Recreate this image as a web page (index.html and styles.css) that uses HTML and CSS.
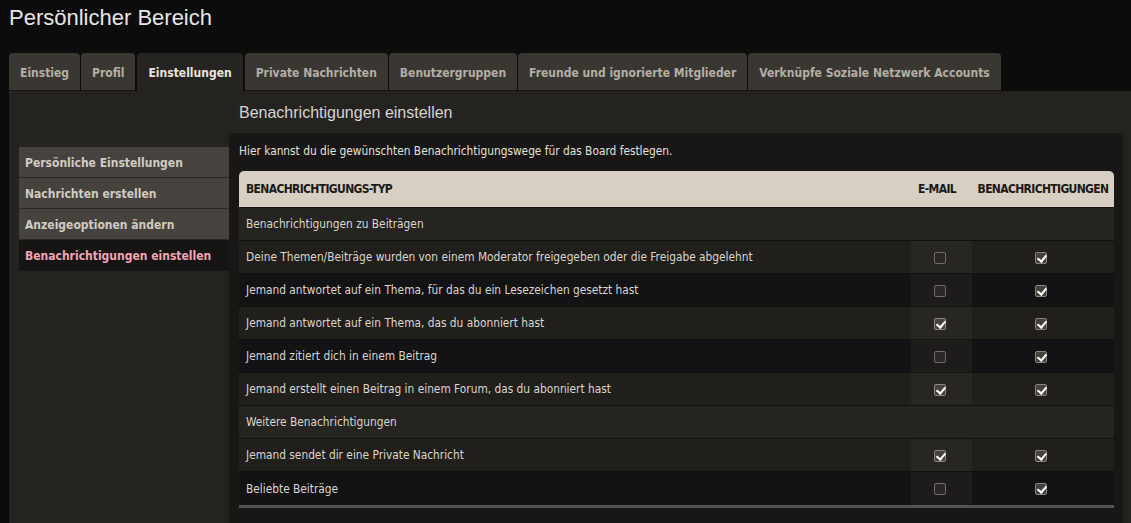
FILE: index.html
```html
<!DOCTYPE html>
<html>
<head>
  <meta charset="UTF-8">
  <title>Persönlicher Bereich</title>
  <meta name="viewport" content="width=device-width, initial-scale=1.0">
  <link rel="stylesheet" href="styles.css">
</head>
<body>
  <h1 class="page-title">Persönlicher Bereich</h1>

  <ul class="tabs">
    <li class="tab">Einstieg</li>
    <li class="tab">Profil</li>
    <li class="tab active">Einstellungen</li>
    <li class="tab">Private Nachrichten</li>
    <li class="tab">Benutzergruppen</li>
    <li class="tab">Freunde und ignorierte Mitglieder</li>
    <li class="tab">Verknüpfe Soziale Netzwerk Accounts</li>
  </ul>

  <div class="panel">
    <ul class="side-menu">
      <li>Persönliche Einstellungen</li>
      <li>Nachrichten erstellen</li>
      <li>Anzeigeoptionen ändern</li>
      <li class="current">Benachrichtigungen einstellen</li>
    </ul>

    <div class="main">
      <h2 class="main-title">Benachrichtigungen einstellen</h2>
      <div class="content">
        <p class="intro">Hier kannst du die gewünschten Benachrichtigungswege für das Board festlegen.</p>

        <table class="notify">
          <thead>
            <tr>
              <th class="col-type">Benachrichtigungs-Typ</th>
              <th class="col-mail">E-Mail</th>
              <th class="col-notify">Benachrichtigungen</th>
            </tr>
          </thead>
          <tbody>
            <tr class="section"><td colspan="3">Benachrichtigungen zu Beiträgen</td></tr>
            <tr class="bg1">
              <td>Deine Themen/Beiträge wurden von einem Moderator freigegeben oder die Freigabe abgelehnt</td>
              <td class="mail"><span class="box"></span></td>
              <td class="note"><span class="box on"></span></td>
            </tr>
            <tr class="bg2">
              <td>Jemand antwortet auf ein Thema, für das du ein Lesezeichen gesetzt hast</td>
              <td class="mail"><span class="box"></span></td>
              <td class="note"><span class="box on"></span></td>
            </tr>
            <tr class="bg1">
              <td>Jemand antwortet auf ein Thema, das du abonniert hast</td>
              <td class="mail"><span class="box on"></span></td>
              <td class="note"><span class="box on"></span></td>
            </tr>
            <tr class="bg2">
              <td>Jemand zitiert dich in einem Beitrag</td>
              <td class="mail"><span class="box"></span></td>
              <td class="note"><span class="box on"></span></td>
            </tr>
            <tr class="bg1">
              <td>Jemand erstellt einen Beitrag in einem Forum, das du abonniert hast</td>
              <td class="mail"><span class="box on"></span></td>
              <td class="note"><span class="box on"></span></td>
            </tr>
            <tr class="section"><td colspan="3">Weitere Benachrichtigungen</td></tr>
            <tr class="bg1">
              <td>Jemand sendet dir eine Private Nachricht</td>
              <td class="mail"><span class="box on"></span></td>
              <td class="note"><span class="box on"></span></td>
            </tr>
            <tr class="bg2">
              <td>Beliebte Beiträge</td>
              <td class="mail"><span class="box"></span></td>
              <td class="note"><span class="box on"></span></td>
            </tr>
          </tbody>
        </table>
      </div>
    </div>
  </div>
</body>
</html>
```

FILE: styles.css
```css
* {
  box-sizing: border-box;
}

body {
  margin: 0;
  background: #0d0c0c;
  font-family: "DejaVu Sans Condensed", "DejaVu Sans", sans-serif;
  font-stretch: condensed;
  font-size: 11.8px;
  color: #dad6ce;
  overflow: hidden;
}

.page-title {
  margin: 0;
  padding: 5px 0 0 9px;
  height: 53px;
  font-family: "Liberation Sans", Arial, sans-serif;
  font-stretch: normal;
  font-weight: normal;
  font-size: 22px;
  line-height: 26px;
  color: #e6e6e6;
}

/* tab bar */
.tabs {
  list-style: none;
  margin: 0 0 0 9px;
  padding: 0;
  display: flex;
  gap: 1px;
}

.tab {
  height: 38px;
  padding: 0 11px;
  line-height: 40px;
  font-weight: bold;
  font-size: 12px;
  color: #b4aea4;
  background: #3a3733;
  border-radius: 4px 4px 0 0;
  border-bottom: 1px solid #141312;
}

.tab.active {
  background: #262420;
  color: #e8e4dc;
  border-bottom-color: #262420;
  margin: 0 1px;
}

/* panel under the tabs */
.panel {
  margin-left: 9px;
  background: #252320;
  display: flex;
  min-height: 440px;
}

.side-menu {
  list-style: none;
  margin: 56px 0 0 10px;
  padding: 0;
  width: 210px;
  flex-shrink: 0;
}

.side-menu li {
  height: 31px;
  padding: 2px 0 0 6px;
  line-height: 28px;
  font-weight: bold;
  font-size: 12px;
  color: #d2cbc2;
  background: #46433e;
  border-bottom: 1px solid #2a2826;
}

.side-menu li.current {
  background: #171514;
  color: #f2a5b5;
  border-bottom: none;
}

.main {
  flex: 1;
  padding-right: 8px;
}

.main-title {
  margin: 0;
  padding: 12px 0 0 10px;
  height: 42px;
  font-family: "Liberation Sans", Arial, sans-serif;
  font-stretch: normal;
  font-weight: normal;
  font-size: 16px;
  line-height: 20px;
  color: #d4d4d4;
}

.content {
  background: #191716;
  border-radius: 0 5px 0 0;
  padding: 10px 9px 20px 10px;
}

.intro {
  margin: 0 0 12px;
  line-height: 16px;
  color: #e4e1dc;
}

/* notification table */
.notify {
  width: 100%;
  border-collapse: separate;
  border-spacing: 0;
  border-bottom: 3px solid #555350;
}

.notify th {
  height: 37px;
  background: #d6cfc2;
  color: #1c1a18;
  font-weight: bold;
  font-size: 12px;
  letter-spacing: -0.65px;
  text-transform: uppercase;
  border-bottom: 1px solid #141312;
}

.notify .col-type {
  text-align: left;
  padding-left: 7px;
  border-radius: 5px 0 0 0;
}

.notify .col-mail {
  width: 61px;
  text-align: center;
  padding-right: 10px;
}

.notify .col-notify {
  width: 142px;
  text-align: center;
  border-radius: 0 5px 0 0;
}

.notify td {
  height: 33px;
  padding: 0 0 0 7px;
  border-bottom: 1px solid #121110;
}

.notify tr:last-child td {
  border-bottom: none;
  height: 33px;
}

.notify .section td {
  background: #262420;
}

.notify .bg1 td {
  background: #211f1c;
}

.notify .bg2 td {
  background: #131214;
}

.notify td.mail,
.notify td.note {
  padding: 0;
  text-align: center;
}

.notify .bg1 td.mail {
  background: #282623;
}

.notify .bg2 td.mail {
  background: #1e1c1b;
}

/* checkboxes */
.box {
  display: inline-block;
  width: 12px;
  height: 12px;
  margin: 0 4px 0 0;
  vertical-align: middle;
  border: 1px solid #6f6b66;
  border-radius: 2px;
  background: #2a2826;
  position: relative;
}

.box.on {
  background: #45423e;
  border-color: #8a8580;
}

.box.on::after {
  content: "";
  position: absolute;
  left: 3px;
  top: 0;
  width: 4px;
  height: 7px;
  border: solid #ffffff;
  border-width: 0 2px 2px 0;
  transform: rotate(40deg);
}
```
